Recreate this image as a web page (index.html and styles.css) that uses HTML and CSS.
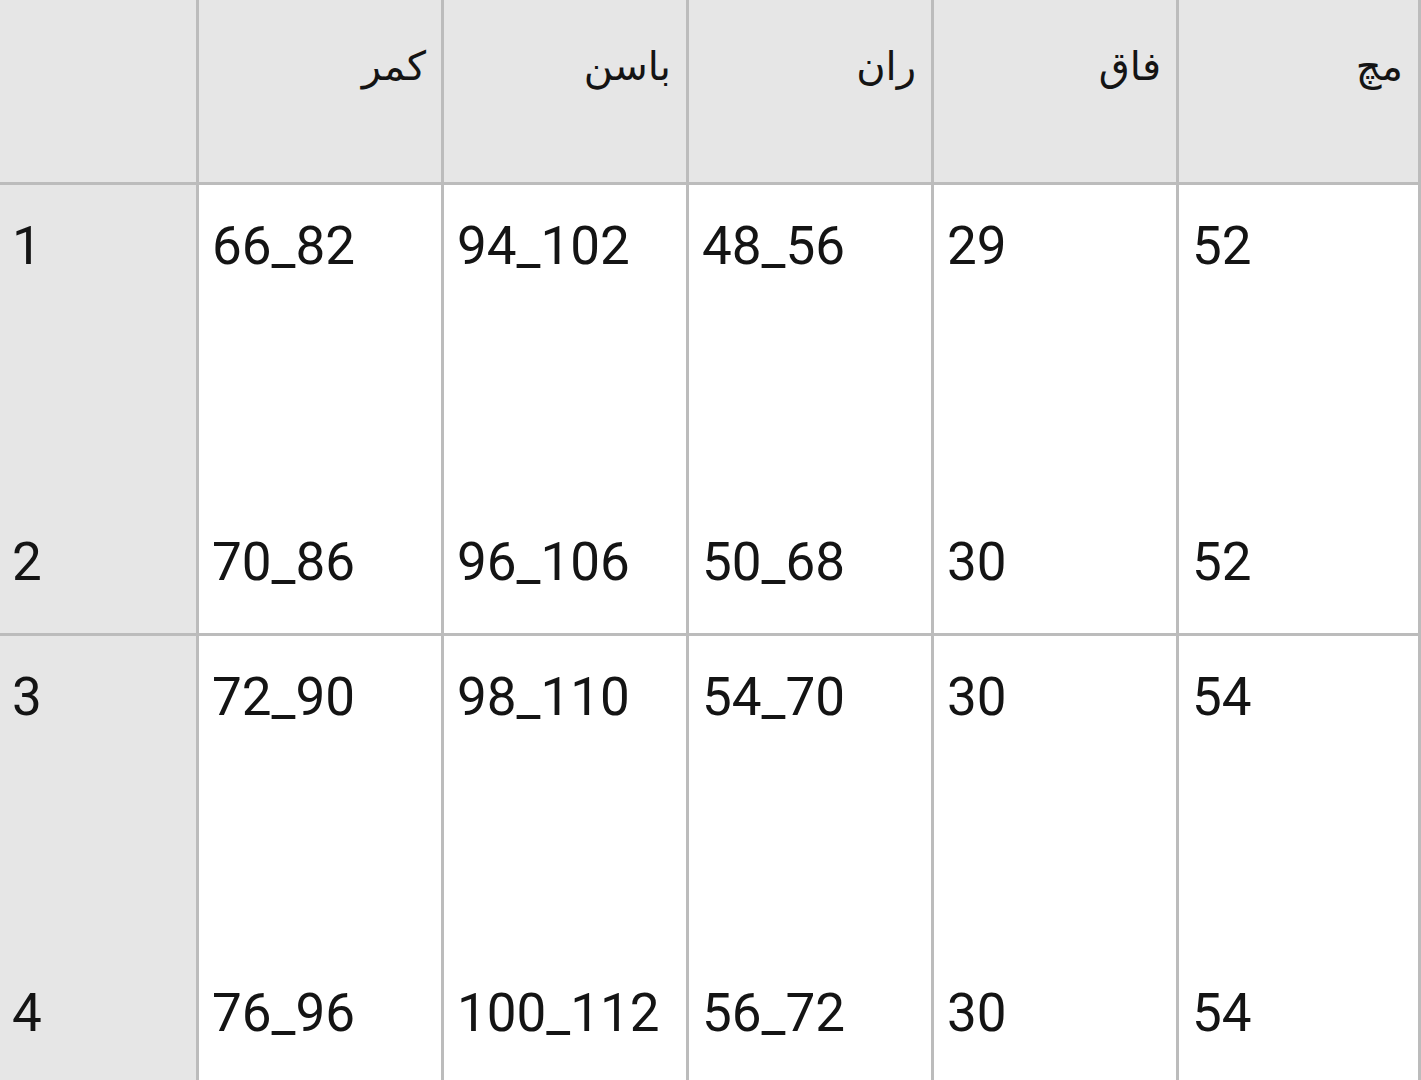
FILE: index.html
```html
<!DOCTYPE html>
<html lang="fa">
<head>
<meta charset="utf-8">
<title>جدول سایز</title>
<link rel="stylesheet" href="styles.css">
</head>
<body>
<div class="sheet">
  <div class="cell head corner"></div>
  <div class="cell head"><span class="fa">کمر</span></div>
  <div class="cell head"><span class="fa">باسن</span></div>
  <div class="cell head"><span class="fa">ران</span></div>
  <div class="cell head"><span class="fa">فاق</span></div>
  <div class="cell head"><span class="fa">مچ</span></div>

  <div class="cell idx"><span>1</span><span>2</span></div>
  <div class="cell"><span>66_82</span><span>70_86</span></div>
  <div class="cell"><span>94_102</span><span>96_106</span></div>
  <div class="cell"><span>48_56</span><span>50_68</span></div>
  <div class="cell"><span>29</span><span>30</span></div>
  <div class="cell"><span>52</span><span>52</span></div>

  <div class="cell idx"><span>3</span><span>4</span></div>
  <div class="cell"><span>72_90</span><span>76_96</span></div>
  <div class="cell"><span>98_110</span><span>100_112</span></div>
  <div class="cell"><span>54_70</span><span>56_72</span></div>
  <div class="cell"><span>30</span><span>30</span></div>
  <div class="cell"><span>54</span><span>54</span></div>
</div>
</body>
</html>
```

FILE: styles.css
```css
html, body {
  margin: 0;
  padding: 0;
  background: #ffffff;
  overflow: hidden;
}

.sheet {
  display: grid;
  grid-template-columns: 196px 242px 242px 242px 242px 239px;
  grid-template-rows: 182px 448px 448px;
  gap: 3px;
  padding-right: 3px;
  width: 1421px;
  box-sizing: border-box;
  background: #bcbcbc;
  font-family: Roboto, "Liberation Sans", sans-serif;
  font-size: 53px;
  line-height: 62px;
  color: #141414;
}

.cell {
  background: #ffffff;
  display: flex;
  flex-direction: column;
  gap: 254px;
  padding: 30px 0 0 13px;
  box-sizing: border-box;
}

.idx {
  background: #e6e6e6;
  padding-left: 12px;
}

.head {
  background: #e6e6e6;
  padding: 35px 15px 0 0;
  align-items: flex-end;
}

.fa {
  font-family: "DejaVu Sans", sans-serif;
  font-size: 40px;
  line-height: 62px;
  direction: rtl;
}
```
